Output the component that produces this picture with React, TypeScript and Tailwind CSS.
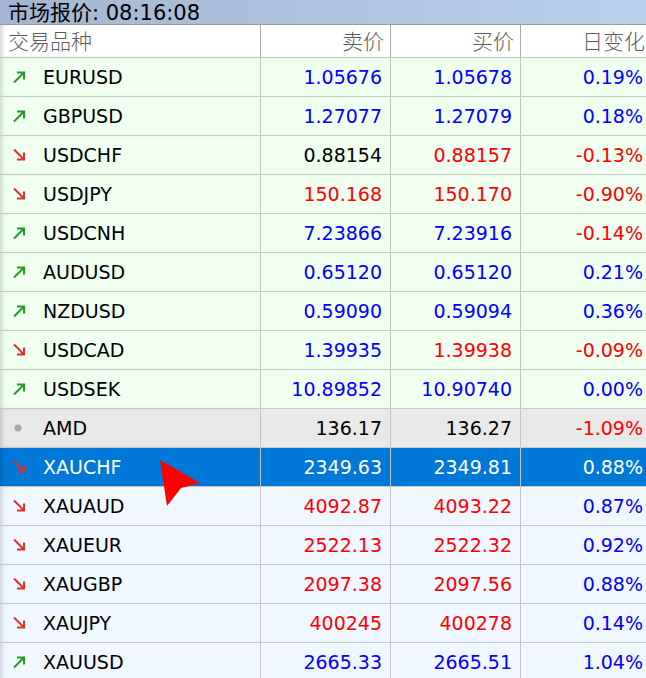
type Dir = "up" | "down" | "flat";
type Tone = "blue" | "red" | "black";

interface Quote {
  symbol: string;
  dir: Dir;
  bid: string;
  ask: string;
  change: string;
  bidTone: Tone;
  askTone: Tone;
  changeTone: Tone;
  group: "fx" | "stock" | "metal";
}

const quotes: Quote[] = [
  { symbol: "EURUSD", dir: "up", bid: "1.05676", ask: "1.05678", change: "0.19%", bidTone: "blue", askTone: "blue", changeTone: "blue", group: "fx" },
  { symbol: "GBPUSD", dir: "up", bid: "1.27077", ask: "1.27079", change: "0.18%", bidTone: "blue", askTone: "blue", changeTone: "blue", group: "fx" },
  { symbol: "USDCHF", dir: "down", bid: "0.88154", ask: "0.88157", change: "-0.13%", bidTone: "black", askTone: "red", changeTone: "red", group: "fx" },
  { symbol: "USDJPY", dir: "down", bid: "150.168", ask: "150.170", change: "-0.90%", bidTone: "red", askTone: "red", changeTone: "red", group: "fx" },
  { symbol: "USDCNH", dir: "up", bid: "7.23866", ask: "7.23916", change: "-0.14%", bidTone: "blue", askTone: "blue", changeTone: "red", group: "fx" },
  { symbol: "AUDUSD", dir: "up", bid: "0.65120", ask: "0.65120", change: "0.21%", bidTone: "blue", askTone: "blue", changeTone: "blue", group: "fx" },
  { symbol: "NZDUSD", dir: "up", bid: "0.59090", ask: "0.59094", change: "0.36%", bidTone: "blue", askTone: "blue", changeTone: "blue", group: "fx" },
  { symbol: "USDCAD", dir: "down", bid: "1.39935", ask: "1.39938", change: "-0.09%", bidTone: "blue", askTone: "red", changeTone: "red", group: "fx" },
  { symbol: "USDSEK", dir: "up", bid: "10.89852", ask: "10.90740", change: "0.00%", bidTone: "blue", askTone: "blue", changeTone: "blue", group: "fx" },
  { symbol: "AMD", dir: "flat", bid: "136.17", ask: "136.27", change: "-1.09%", bidTone: "black", askTone: "black", changeTone: "red", group: "stock" },
  { symbol: "XAUCHF", dir: "down", bid: "2349.63", ask: "2349.81", change: "0.88%", bidTone: "red", askTone: "red", changeTone: "blue", group: "metal" },
  { symbol: "XAUAUD", dir: "down", bid: "4092.87", ask: "4093.22", change: "0.87%", bidTone: "red", askTone: "red", changeTone: "blue", group: "metal" },
  { symbol: "XAUEUR", dir: "down", bid: "2522.13", ask: "2522.32", change: "0.92%", bidTone: "red", askTone: "red", changeTone: "blue", group: "metal" },
  { symbol: "XAUGBP", dir: "down", bid: "2097.38", ask: "2097.56", change: "0.88%", bidTone: "red", askTone: "red", changeTone: "blue", group: "metal" },
  { symbol: "XAUJPY", dir: "down", bid: "400245", ask: "400278", change: "0.14%", bidTone: "red", askTone: "red", changeTone: "blue", group: "metal" },
  { symbol: "XAUUSD", dir: "up", bid: "2665.33", ask: "2665.51", change: "1.04%", bidTone: "blue", askTone: "blue", changeTone: "blue", group: "metal" },
];

const selected = "XAUCHF";

const toneClass: Record<Tone, string> = {
  blue: "text-[#0000ff]",
  red: "text-[#ff0000]",
  black: "text-black",
};

const groupBg = {
  fx: "bg-[#f0fff0]",
  stock: "bg-[#e9e9e9]",
  metal: "bg-[#f0f7ff]",
};

const DirIcon = ({ dir }: { dir: Dir }) => {
  if (dir === "flat") {
    return (
      <svg width="14" height="14" viewBox="0 0 14 14">
        <circle cx="6" cy="7" r="3.5" fill="#a6a6a6" />
      </svg>
    );
  }
  const up = dir === "up";
  return (
    <svg width="14" height="14" viewBox="0 0 14 14" fill="none">
      <path
        d={up ? "M2 12.5 L12 2.5 M5 2.5 H12 V9.5" : "M2 1.5 L12 11.5 M12 4.5 V11.5 H5"}
        stroke={up ? "#1e9e1e" : "#e0302c"}
        strokeWidth="2"
      />
    </svg>
  );
};

const App = () => {
  return (
    <div className="relative w-[646px] h-[678px] overflow-hidden bg-white font-['DejaVu_Sans','Noto_Sans_CJK_SC',sans-serif]">
      <div className="h-[24px] bg-gradient-to-r from-[#a3b5d2] to-[#b9d1ea] border-b border-[#9a9a9a] box-content overflow-hidden">
        <div className="pl-[8px] -mt-[2px] text-[21px] leading-[26px] text-black whitespace-nowrap">
          <span className="font-['Noto_Sans_CJK_SC',sans-serif]">市场报价</span>: 08:16:08
        </div>
      </div>

      <div className="w-[651px]">
        <div className="grid grid-cols-[261px_130px_130px_130px] h-[33px] bg-white border-b border-[#c4c4c4] text-[21px] text-[#5c5c5c] font-['Noto_Sans_CJK_SC',sans-serif] font-light">
          <div className="flex items-center pl-[8px] border-r border-[#a8a8a8] shadow-[inset_4px_0_4px_-2px_rgba(0,0,0,0.18)]">交易品种</div>
          <div className="flex items-center justify-end pr-[6px] border-r border-[#a8a8a8]">卖价</div>
          <div className="flex items-center justify-end pr-[6px] border-r border-[#a8a8a8]">买价</div>
          <div className="flex items-center justify-end pr-[6px]">日变化</div>
        </div>

        {quotes.map((q) => {
          const isSel = q.symbol === selected;
          const bg = isSel ? "bg-[#0078d7]" : groupBg[q.group];
          const tone = (t: Tone) => (isSel ? "text-white" : toneClass[t]);
          return (
            <div
              key={q.symbol}
              className={`grid grid-cols-[261px_130px_130px_130px] h-[39px] border-b border-[#c8c8c8] text-[19px] ${bg}`}
            >
              <div className="flex items-center pl-[12px] border-r border-[#c4c4c4] shadow-[inset_4px_0_4px_-2px_rgba(0,0,0,0.16)]">
                <DirIcon dir={q.dir} />
                <span className={`ml-[17px] ${isSel ? "text-white" : "text-black"}`}>{q.symbol}</span>
              </div>
              <div className={`flex items-center justify-end pr-[8px] border-r border-[#c4c4c4] ${tone(q.bidTone)}`}>{q.bid}</div>
              <div className={`flex items-center justify-end pr-[8px] border-r border-[#c4c4c4] ${tone(q.askTone)}`}>{q.ask}</div>
              <div className={`flex items-center justify-end pr-[8px] ${tone(q.changeTone)}`}>{q.change}</div>
            </div>
          );
        })}
      </div>

      <svg className="absolute left-[158px] top-[458px]" width="46" height="52" viewBox="0 0 46 52">
        <polygon points="2,2 42,25 23,30 9,48" fill="#ff0000" />
      </svg>
    </div>
  );
};

export default App;
